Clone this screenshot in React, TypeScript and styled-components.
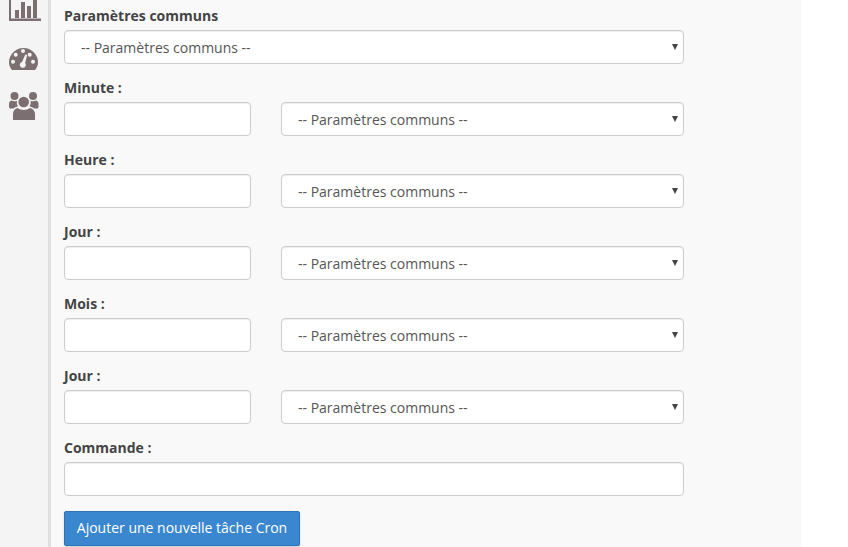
import React from 'react'
import styled, { createGlobalStyle } from 'styled-components'

const GlobalStyle = createGlobalStyle`
  html, body {
    margin: 0;
    padding: 0;
    height: 547px;
    overflow: hidden;
    background: #fff;
    font-family: "Open Sans", "Liberation Sans", sans-serif;
  }
`

const Page = styled.div`
  display: flex;
  width: 848px;
  height: 547px;
  overflow: hidden;
`

const Sidebar = styled.aside`
  width: 39px;
  flex: none;
  display: flex;
  flex-direction: column;
  align-items: flex-start;
  padding-left: 9px;
  background: #f4f4f4;
  border-right: 3px solid #e0e0e0;
`

const NavIcon = styled.svg<{ $top: number }>`
  display: block;
  flex: none;
  margin-top: ${({ $top }) => $top}px;
  fill: #7b6f72;
`

const Main = styled.main`
  width: 750px;
  flex: none;
  box-sizing: border-box;
  padding: 6px 0 0 13px;
  background: #f9f9f9;
`

const Group = styled.div`
  width: 620px;
  margin-bottom: 14px;
`

const Label = styled.label`
  display: block;
  margin-bottom: 4px;
  font-size: 14px;
  line-height: 20px;
  font-weight: 700;
  color: #444;
`

const Row = styled.div`
  display: flex;
  gap: 30px;
`

const TextInput = styled.input<{ $wide?: boolean }>`
  display: block;
  box-sizing: border-box;
  width: ${({ $wide }) => ($wide ? '620px' : '187px')};
  height: 34px;
  padding: 6px 12px;
  background: #fff;
  border: 1px solid #ccc;
  border-radius: 4px;
  box-shadow: inset 0 1px 1px rgba(0, 0, 0, 0.075);
  font: inherit;
`

const SelectWrap = styled.div<{ $wide?: boolean }>`
  position: relative;
  width: ${({ $wide }) => ($wide ? '620px' : '403px')};

  &::after {
    content: '';
    position: absolute;
    top: 14px;
    right: 6px;
    border-style: solid;
    border-width: 6px 3px 0;
    border-color: #444 transparent transparent;
  }
`

const Select = styled.select`
  display: block;
  box-sizing: border-box;
  width: 100%;
  height: 34px;
  padding: 7px 12px 6px 16px;
  appearance: none;
  background: #fff;
  border: 1px solid #ccc;
  border-radius: 4px;
  box-shadow: inset 0 1px 1px rgba(0, 0, 0, 0.075);
  font-family: inherit;
  font-size: 14px;
  line-height: 20px;
  color: #555;
`

const SubmitButton = styled.button`
  display: block;
  box-sizing: border-box;
  width: 236px;
  height: 35px;
  margin-top: 15px;
  padding: 0 0 2px;
  background: #3a87d0;
  border: 1px solid #2e74b8;
  border-radius: 2px;
  box-shadow: 0 1px 2px rgba(0, 0, 0, 0.2);
  font-family: inherit;
  font-size: 14px;
  color: #fff;
`

function CommonSelect({ wide }: { wide?: boolean }) {
  return (
    <SelectWrap $wide={wide}>
      <Select defaultValue="">
        <option value="">-- Paramètres communs --</option>
      </Select>
    </SelectWrap>
  )
}

const fields = ['Minute :', 'Heure :', 'Jour :', 'Mois :', 'Jour :']

export default function App() {
  return (
    <Page>
      <GlobalStyle />
      <Sidebar>
        <NavIcon $top={0} width="32" height="21" viewBox="0 0 32 21">
          <path d="M0 0h2v18.500h30V21H0z" />
          <path d="M6 10h4v8H6zM12 2h4v16h-4zM18 6h4v12h-4zM24 0h4v18h-4z" />
        </NavIcon>
        <NavIcon $top={27} width="29" height="22" viewBox="0 0 29 22">
          <path
            fillRule="evenodd"
            d="M3 22C1 19.500 0 17 0 14.500a14.500 14.500 0 0 1 29 0c0 2.500-1 5-3 7.500zM14 1a2 2 0 1 0 0 4 2 2 0 0 0 0-4zM6.700 4.700a2 2 0 1 0 0 4 2 2 0 0 0 0-4zM20.700 4.700a2 2 0 1 0 0 4 2 2 0 0 0 0-4zM4 11.700a2 2 0 1 0 0 4 2 2 0 0 0 0-4zM24 11.700a2 2 0 1 0 0 4 2 2 0 0 0 0-4zM16.300 6.400l-3.300 7.500a3 3 0 1 0 3.200 1.100l1.900-8z"
          />
        </NavIcon>
        <NavIcon $top={22} width="30" height="28" viewBox="0 0 30 28">
          <circle cx="14.700" cy="10" r="5.300" />
          <circle cx="5.500" cy="4" r="4" />
          <circle cx="24" cy="4" r="4" />
          <path d="M4 28v-6c0-3.500 2-5.500 4.500-6 3.500 2.500 9 2.500 12.500 0 2.500.5 5 2.500 5 6v6z" />
          <path d="M0 15v-3c0-2 1-3 2.500-3.500 1.500 1 4 1 5.500.2-.5 2.500 0 4 1 5.500-2 .5-3.500 1.200-4.500 2.300H2c-1 0-2-.5-2-1.500z" />
          <path d="M29.500 15v-3c0-2-1-3-2.500-3.500-1.500 1-4 1-5.500.2.500 2.500 0 4-1 5.500 2 .5 3.500 1.200 4.500 2.300h2.500c1 0 2-.5 2-1.500z" />
        </NavIcon>
      </Sidebar>
      <Main>
        <Group>
          <Label>Paramètres communs</Label>
          <CommonSelect wide />
        </Group>
        {fields.map((name, i) => (
          <Group key={i}>
            <Label>{name}</Label>
            <Row>
              <TextInput type="text" />
              <CommonSelect />
            </Row>
          </Group>
        ))}
        <Group>
          <Label>Commande :</Label>
          <TextInput type="text" $wide />
        </Group>
        <SubmitButton type="button">Ajouter une nouvelle tâche Cron</SubmitButton>
      </Main>
    </Page>
  )
}
